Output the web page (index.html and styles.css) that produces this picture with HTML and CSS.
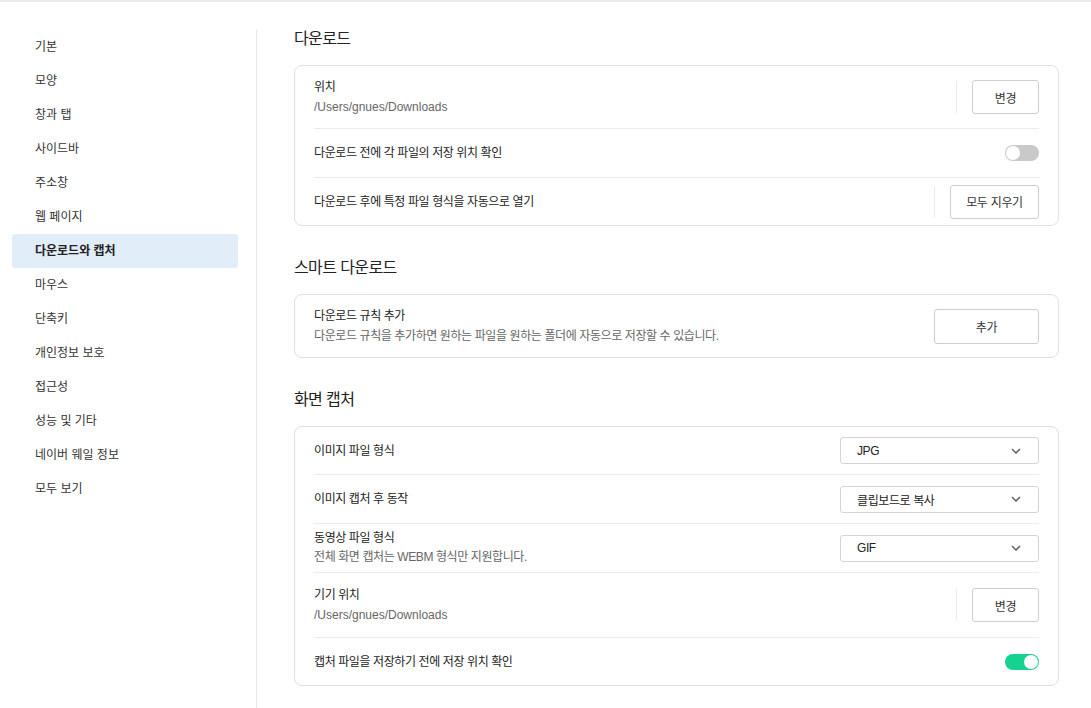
FILE: index.html
```html
<!DOCTYPE html>
<html lang="ko">
<head>
  <meta charset="UTF-8" />
  <title>설정 - 다운로드와 캡처</title>
  <link rel="stylesheet" href="styles.css">
</head>
<body>
  <div class="page">
    <nav class="sidebar">
      <a class="nav-item">기본</a>
      <a class="nav-item">모양</a>
      <a class="nav-item">창과 탭</a>
      <a class="nav-item">사이드바</a>
      <a class="nav-item">주소창</a>
      <a class="nav-item">웹 페이지</a>
      <a class="nav-item active">다운로드와 캡처</a>
      <a class="nav-item">마우스</a>
      <a class="nav-item">단축키</a>
      <a class="nav-item">개인정보 보호</a>
      <a class="nav-item">접근성</a>
      <a class="nav-item">성능 및 기타</a>
      <a class="nav-item">네이버 웨일 정보</a>
      <a class="nav-item">모두 보기</a>
    </nav>

    <main class="content">
      <section class="section">
        <h2>다운로드</h2>
        <div class="card">
          <div class="row two-line">
            <div class="label">
              <div class="title">위치</div>
              <div class="desc path">/Users/gnues/Downloads</div>
            </div>
            <span class="vsep"></span>
            <button class="btn btn-sm">변경</button>
          </div>
          <div class="row">
            <div class="label"><div class="title">다운로드 전에 각 파일의 저장 위치 확인</div></div>
            <span class="toggle"></span>
          </div>
          <div class="row">
            <div class="label"><div class="title">다운로드 후에 특정 파일 형식을 자동으로 열기</div></div>
            <span class="vsep"></span>
            <button class="btn btn-md">모두 지우기</button>
          </div>
        </div>
      </section>

      <section class="section">
        <h2>스마트 다운로드</h2>
        <div class="card">
          <div class="row two-line">
            <div class="label">
              <div class="title">다운로드 규칙 추가</div>
              <div class="desc">다운로드 규칙을 추가하면 원하는 파일을 원하는 폴더에 자동으로 저장할 수 있습니다.</div>
            </div>
            <button class="btn btn-lg">추가</button>
          </div>
        </div>
      </section>

      <section class="section">
        <h2>화면 캡처</h2>
        <div class="card">
          <div class="row first">
            <div class="label"><div class="title">이미지 파일 형식</div></div>
            <div class="select">JPG<svg class="chev" viewBox="0 0 10 6" width="10" height="6"><path d="M1 1l4 4 4-4" fill="none" stroke="#666" stroke-width="1.6"/></svg></div>
          </div>
          <div class="row">
            <div class="label"><div class="title">이미지 캡처 후 동작</div></div>
            <div class="select">클립보드로 복사<svg class="chev" viewBox="0 0 10 6" width="10" height="6"><path d="M1 1l4 4 4-4" fill="none" stroke="#666" stroke-width="1.6"/></svg></div>
          </div>
          <div class="row two-line tight">
            <div class="label">
              <div class="title">동영상 파일 형식</div>
              <div class="desc">전체 화면 캡처는 WEBM 형식만 지원합니다.</div>
            </div>
            <div class="select">GIF<svg class="chev" viewBox="0 0 10 6" width="10" height="6"><path d="M1 1l4 4 4-4" fill="none" stroke="#666" stroke-width="1.6"/></svg></div>
          </div>
          <div class="row two-line tall">
            <div class="label">
              <div class="title">기기 위치</div>
              <div class="desc path">/Users/gnues/Downloads</div>
            </div>
            <span class="vsep"></span>
            <button class="btn btn-sm">변경</button>
          </div>
          <div class="row">
            <div class="label"><div class="title">캡처 파일을 저장하기 전에 저장 위치 확인</div></div>
            <span class="toggle on"></span>
          </div>
        </div>
      </section>
    </main>
  </div>
</body>
</html>
```

FILE: styles.css
```css
html, body {
  margin: 0;
  height: 100%;
  background: #fff;
}
body {
  font-family: "Liberation Sans", "Noto Sans CJK KR", sans-serif;
  color: #222;
  border-top: 2px solid #ececec;
  box-sizing: border-box;
  overflow: hidden;
}
.page {
  display: flex;
  height: 100%;
}
.sidebar {
  width: 226px;
  padding: 0 18px 0 12px;
  margin-top: 28px;
  flex-shrink: 0;
  border-right: 1px solid #dfe7ef;
}
.nav-item {
  display: block;
  height: 34px;
  line-height: 34px;
  padding-left: 23px;
  font-size: 12px;
  color: #333;
  border-radius: 3px;
  cursor: pointer;
}
.nav-item.active {
  background: #e1edf9;
  color: #222;
  font-weight: bold;
}
.content {
  flex: 1;
  padding: 26px 32px 0 37px;
}
.section {
  margin-bottom: 31px;
}
.section h2 {
  font-size: 16px;
  font-weight: normal;
  line-height: 22px;
  letter-spacing: -0.6px;
  margin: 0 0 15px;
  color: #222;
}
.card {
  border: 1px solid #d9e2ea;
  border-radius: 8px;
  padding: 0 19px;
}
.row {
  display: flex;
  align-items: center;
  height: 49px;
  box-sizing: border-box;
  border-bottom: 1px solid #ececec;
  font-size: 12px;
  letter-spacing: -0.4px;
}
.row.first {
  height: 48px;
}
.row:last-child {
  height: 47px;
  border-bottom: none;
}
.row.two-line {
  height: auto;
  padding: 11px 0;
}
.row.two-line.tight {
  padding: 5px 0;
}
.row.two-line.tall {
  padding: 12px 0;
}
.label {
  flex: 1;
  line-height: 20px;
}
.row.tight .label {
  line-height: 19px;
}
.title {
  color: #222;
}
.desc {
  color: #666;
}
.desc.path {
  letter-spacing: 0;
}
.vsep {
  width: 1px;
  height: 32px;
  background: #ebebeb;
  margin-right: 15px;
}
.btn {
  height: 34px;
  background: #fff;
  border: 1px solid #cdcdcd;
  border-radius: 3px;
  font-family: inherit;
  font-size: 12px;
  letter-spacing: -0.3px;
  color: #333;
  padding: 0;
  cursor: pointer;
}
.btn-sm { width: 67px; }
.btn-md { width: 89px; }
.btn-lg { width: 105px; height: 35px; }
.select {
  width: 199px;
  height: 27px;
  box-sizing: border-box;
  border: 1px solid #d4d4d4;
  border-radius: 3px;
  display: flex;
  align-items: center;
  justify-content: space-between;
  padding: 0 17px 0 16px;
  font-size: 12px;
  color: #222;
}
.chev {
  display: block;
}
.toggle {
  position: relative;
  width: 34px;
  height: 16px;
  border-radius: 8px;
  background: #c9c9c9;
}
.toggle::after {
  content: "";
  position: absolute;
  top: 1px;
  left: 1px;
  width: 14px;
  height: 14px;
  border-radius: 50%;
  background: #fff;
}
.toggle.on {
  background: #15d38f;
}
.toggle.on::after {
  left: 19px;
}
```
